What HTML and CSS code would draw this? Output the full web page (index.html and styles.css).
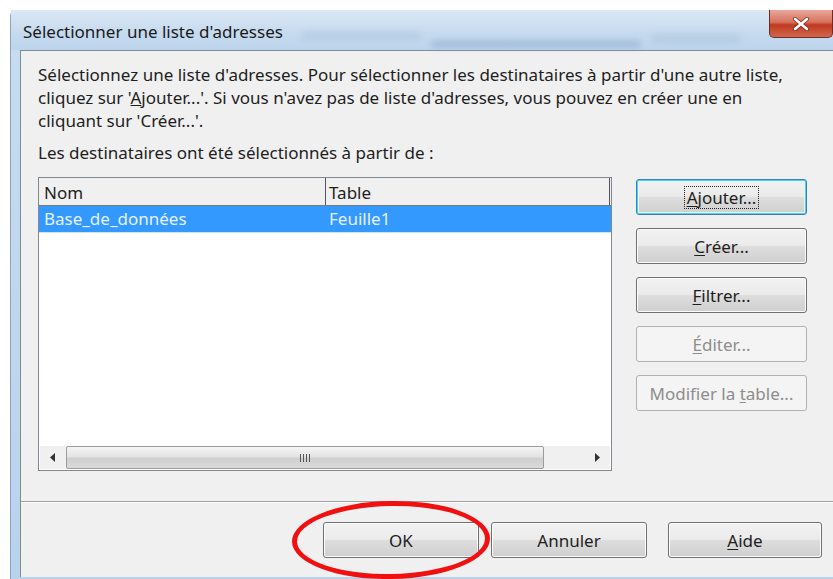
FILE: index.html
```html
<!DOCTYPE html>
<html lang="fr">
<head>
<meta charset="utf-8">
<title>Sélectionner une liste d'adresses</title>
<link rel="stylesheet" href="styles.css">
</head>
<body>
<div class="window">
  <div class="titlebar">
    <span class="title">Sélectionner une liste d'adresses</span>
    <span class="ghost ghost-a"></span>
    <span class="ghost ghost-c"></span>
    <span class="ghost ghost-b"></span>
    <button class="close" aria-label="Fermer">
      <svg width="20" height="14" viewBox="0 0 20 14"><path d="M4 2 L16 12 M16 2 L4 12" stroke="#7a2a20" stroke-width="4.2" stroke-linecap="round"/><path d="M4 2 L16 12 M16 2 L4 12" stroke="#ffffff" stroke-width="2.6" stroke-linecap="round"/></svg>
    </button>
  </div>
  <div class="client">
    <p class="intro">Sélectionnez une liste d'adresses. Pour sélectionner les destinataires à partir d'une autre liste,<br>cliquez sur '<u>A</u>jouter...'. Si vous n'avez pas de liste d'adresses, vous pouvez en créer une en<br>cliquant sur 'Créer...'.</p>
    <p class="label">Les destinataires ont été sélectionnés à partir de :</p>
    <div class="main">
      <div class="listbox">
        <div class="head">
          <div class="col c1">Nom</div>
          <div class="col c2">Table</div>
        </div>
        <div class="row selected">
          <div class="cell c1">Base_de_données</div>
          <div class="cell c2">Feuille1</div>
        </div>
        <div class="list-fill"></div>
        <div class="hscroll">
          <div class="arrow left"><svg width="6" height="9" viewBox="0 0 6 9"><path d="M5 0 L0 4.5 L5 9 Z" fill="#333"/></svg></div>
          <div class="thumb"><span class="grip"></span></div>
          <div class="track"></div>
          <div class="arrow right"><svg width="6" height="9" viewBox="0 0 6 9"><path d="M1 0 L6 4.5 L1 9 Z" fill="#333"/></svg></div>
        </div>
      </div>
      <div class="side">
        <button class="btn default"><span class="focus"><u>A</u>jouter...</span></button>
        <button class="btn"><span><u>C</u>réer...</span></button>
        <button class="btn"><span><u>F</u>iltrer...</span></button>
        <button class="btn disabled"><span><u>É</u>diter...</span></button>
        <button class="btn disabled"><span>Modifier la <u>t</u>able...</span></button>
      </div>
    </div>
    <div class="footer">
      <div class="ok-wrap">
        <button class="btn wide">OK</button>
        <span class="ring"></span>
      </div>
      <button class="btn wide">Annuler</button>
      <button class="btn wide help"><span><u>A</u>ide</span></button>
    </div>
  </div>
</div>
</body>
</html>
```

FILE: styles.css
```css
html, body {
  margin: 0;
  padding: 0;
  background: #ffffff;
  width: 833px;
  height: 579px;
  overflow: hidden;
  font-family: "Noto Sans", "Open Sans", sans-serif;
  color: #1e1e1e;
}

.window {
  margin: 10px -10px 0 10px;
  height: 569px;
  background: linear-gradient(180deg, #c9dcef 0%, #b9d2ec 100%);
  border-left: 1px solid #8aa4c0;
  border-top-left-radius: 6px;
  padding: 0 0 2px 9px;
  display: flex;
  flex-direction: column;
  box-sizing: border-box;
}

.titlebar {
  height: 40px;
  display: flex;
  align-items: center;
  position: relative;
  background: linear-gradient(180deg, #dbe8f5 0%, #c7dbef 55%, #bcd4ec 100%);
  margin-left: -9px;
  padding-left: 12px;
}

.title {
  font-size: 17px;
  color: #1a1a1a;
  position: relative;
  z-index: 1;
  margin-top: 2px;
}

/* soft glass reflections of the desktop behind the frame */
.ghost {
  position: absolute;
  height: 8px;
  border-radius: 4px;
  background: #8aa8c6;
  filter: blur(3px);
  opacity: 0.5;
}
.ghost-a { left: 420px; top: 30px; width: 210px; }
.ghost-c { left: 290px; top: 22px; width: 120px; opacity: 0.25; }
.ghost-b { left: 640px; top: 24px; width: 90px; opacity: 0.25; }

.close {
  position: absolute;
  right: 10px;
  top: 0;
  width: 64px;
  height: 28px;
  border: 1px solid #6d2b22;
  border-top: none;
  border-radius: 0 0 5px 5px;
  background: linear-gradient(180deg, #e8a89a 0%, #d7725e 45%, #c0391f 55%, #d0684f 100%);
  display: flex;
  align-items: center;
  justify-content: center;
  padding: 0;
}

.client {
  flex: 1;
  background: #f0f0f0;
  border-top: 1px solid #7f8b99;
  border-left: 1px solid #7f8b99;
  display: flex;
  flex-direction: column;
  padding: 0 0 0 17px;
  font-size: 17px;
  color: #1e1e1e;
}

.intro {
  margin: 12px 0 0 0;
  line-height: 23px;
  white-space: nowrap;
}

.label {
  margin: 9px 0 0 0;
  line-height: 23px;
}

.main {
  display: flex;
  margin-top: 13px;
  height: 294px;
}

.listbox {
  width: 572px;
  border: 1px solid #828790;
  background: #ffffff;
  display: flex;
  flex-direction: column;
}

.head {
  display: flex;
  height: 28px;
  background: #f0f0f0;
  border-bottom: 1px solid #7a7a7a;
  box-sizing: border-box;
}

.col {
  line-height: 29px;
  padding-left: 5px;
  box-sizing: border-box;
}
.c1 { width: 286px; }
.c2 { width: 285px; }
.head .c2 { border-left: 1px solid #555; border-right: 1px solid #555; padding-left: 3px; }

.row {
  display: flex;
  height: 26px;
  line-height: 25px;
}
.row .cell { padding-left: 5px; box-sizing: border-box; }
.row .c2 { padding-left: 4px; }
.selected {
  background: #3399ff;
  color: #e6f2ff;
  border-bottom: 1px solid #cfe6ff;
}

.list-fill { flex: 1; }

.hscroll {
  display: flex;
  height: 23px;
  background: #f0f0f0;
  align-items: stretch;
  border-top: 1px solid #fff;
  margin: 0 1px 1px 1px;
}
.arrow {
  width: 26px;
  display: flex;
  align-items: center;
  justify-content: center;
}
.track { width: 40px; }
.thumb {
  width: 478px;
  border: 1px solid #9c9c9c;
  border-radius: 2px;
  background: linear-gradient(180deg, #f4f4f4 0%, #e4e4e4 45%, #cfcfcf 55%, #dadada 100%);
  display: flex;
  align-items: center;
  justify-content: center;
  box-sizing: border-box;
}
.grip {
  width: 10px;
  height: 8px;
  background: repeating-linear-gradient(90deg, #555 0 1px, transparent 1px 3px);
}

.side {
  display: flex;
  flex-direction: column;
  gap: 13px;
  margin-left: 24px;
  padding-top: 2px;
}

.btn {
  font-family: inherit;
  font-size: 17px;
  color: #1e1e1e;
  width: 171px;
  height: 36px;
  border: 1px solid #707070;
  border-radius: 3px;
  background: linear-gradient(180deg, #f2f2f2 0%, #ebebeb 48%, #dddddd 52%, #cfcfcf 100%);
  box-shadow: inset 0 0 0 1px #fcfcfc;
  padding: 0;
  display: flex;
  align-items: center;
  justify-content: center;
}
.btn u { text-underline-offset: 2px; }

.btn.default {
  border-color: #3c7fb1;
  box-shadow: inset 0 0 0 1px #48d4f7, inset 0 0 0 2px #e8f6fd;
}
.btn .focus {
  border: 1px dotted #222;
  padding: 0 2px;
  line-height: 21px;
}

.btn.disabled {
  color: #8d8d8d;
  border-color: #adb2b5;
  background: #f4f4f4;
  box-shadow: none;
}

.footer {
  margin: 30px 0 0 -17px;
  border-top: 1px solid #a0a0a0;
  box-shadow: inset 0 1px 0 #fdfdfd;
  flex: 1;
  display: flex;
  align-items: flex-start;
  padding: 20px 0 0 302px;
  gap: 12px;
}
.btn.wide { width: 156px; height: 36px; }
.btn.help { margin-left: 9px; width: 154px; }

.ok-wrap {
  position: relative;
}
.ring {
  position: absolute;
  left: -31px;
  top: -21px;
  width: 188px;
  height: 68px;
  border: 5px solid #f01010;
  border-radius: 50%;
  transform: rotate(-1deg);
}
```
